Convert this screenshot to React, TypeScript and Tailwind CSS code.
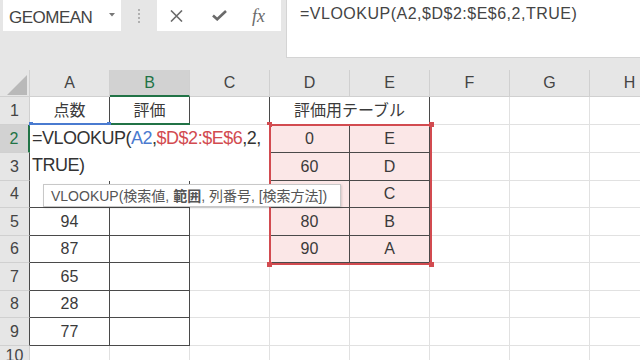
import React from 'react'

const COLS = ['A', 'B', 'C', 'D', 'E', 'F', 'G', 'H']
const HEIGHTS = [28, 28, 28, 27, 28, 27, 28, 27, 28, 20]

// D4 sits under the function tooltip, so it is left out
const values: Record<string, string> = {
    A1: '点数', B1: '評価',
    A5: '94', A6: '87', A7: '65', A8: '28', A9: '77',
    D2: '0', D3: '60', D5: '80', D6: '90',
    E2: 'E', E3: 'D', E4: 'C', E5: 'B', E6: 'A',
}

// dark right border = table edge
function darkRight(r: number, c: number) {
    if (r >= 1 && r <= 9 && c <= 1) return true
    if (r >= 1 && r <= 6 && c >= 2 && c <= 4) return true
    return false
}

function darkBottom(r: number, c: number) {
    if (r >= 1 && r <= 9 && c <= 1) return true
    if (r >= 1 && r <= 6 && (c === 3 || c === 4)) return true
    return false
}

function Cell({ r, c }: { r: number, c: number }) {
    const key = COLS[c] + r
    const pink = r >= 2 && r <= 6 && (c === 3 || c === 4)
    return (
        <div
            className={`w-[80px] shrink-0 h-full border-r border-b flex items-center justify-center text-[16px] leading-none
                ${darkRight(r, c) ? 'border-r-[#4a4a4a]' : 'border-r-[#e1e1e1]'}
                ${darkBottom(r, c) ? 'border-b-[#4a4a4a]' : 'border-b-[#e1e1e1]'}
                ${pink ? 'bg-[#fbe7e7]' : 'bg-white'}`}
        >
            {values[key] ?? ''}
        </div>
    )
}

function Row({ r, h }: { r: number, h: number }) {
    const active = r === 2
    return (
        <div className="flex" style={{ height: h }}>
            <div
                className={`w-[30px] shrink-0 h-full border-b border-b-[#d0d0d0] flex items-center justify-center text-[16px] leading-none
                    ${active ? 'bg-[#d2d2d2] text-[#217346] border-r-2 border-r-[#217346]' : 'bg-[#e6e6e6] text-[#444] border-r'}
                    ${!active && r >= 3 && r <= 9 ? 'border-r-[#4a4a4a]' : ''}
                    ${!active && (r < 3 || r > 9) ? 'border-r-[#d0d0d0]' : ''}`}
            >
                {r}
            </div>
            {r === 1 ? (
                <>
                    <Cell r={1} c={0} />
                    <Cell r={1} c={1} />
                    <Cell r={1} c={2} />
                    <div className="w-[160px] shrink-0 h-full border-r border-r-[#4a4a4a] border-b border-b-[#4a4a4a] flex items-center justify-center text-[16px] leading-none bg-white">
                        評価用テーブル
                    </div>
                    <Cell r={1} c={5} />
                    <Cell r={1} c={6} />
                    <Cell r={1} c={7} />
                </>
            ) : (
                COLS.map((_, c) => <Cell key={c} r={r} c={c} />)
            )}
        </div>
    )
}

function TopBar() {
    return (
        <div className="h-[70px] bg-[#e6e6e6] flex items-start shrink-0">
            <div className="ml-[3px] w-[118px] h-[31px] bg-white relative pl-[6px] pt-[8px]">
                <span className="block text-[17px] leading-[20px] tracking-[-0.5px] text-[#444]">GEOMEAN</span>
                <svg className="absolute left-[106px] top-[13px]" width="6" height="4" viewBox="0 0 6 4">
                    <polygon points="0,0 6,0 3,3.5" fill="#777" />
                </svg>
            </div>
            <div className="w-[36px] h-[31px] flex flex-col items-center justify-center gap-[2px]">
                <span className="w-[2px] h-[2px] bg-[#b0b0b0]" />
                <span className="w-[2px] h-[2px] bg-[#b0b0b0]" />
                <span className="w-[2px] h-[2px] bg-[#b0b0b0]" />
                <span className="w-[2px] h-[2px] bg-[#b0b0b0]" />
            </div>
            <div className="w-[124px] h-[31px] bg-white flex items-center">
                <svg className="ml-[13px]" width="13" height="12" viewBox="0 0 13 12">
                    <path d="M1 0.5 L12 11.5 M12 0.5 L1 11.5" stroke="#6a6a6a" strokeWidth="1.6" fill="none" />
                </svg>
                <svg className="ml-[29px]" width="15" height="11" viewBox="0 0 15 11">
                    <path d="M1 5.5 L5.2 9.3 L14 1" stroke="#6a6a6a" strokeWidth="2.6" fill="none" />
                </svg>
                <span className="ml-[25px] font-['Liberation_Serif',serif] italic text-[18px] leading-none text-[#6a6a6a]">fx</span>
            </div>
            <div className="ml-[5px] flex-1 h-[58px] bg-white border-l border-b border-[#d4d4d4] pl-[13px] pt-[4px]">
                <span className="block text-[16px] leading-[20px] tracking-[0.5px] text-[#444]">=VLOOKUP(A2,$D$2:$E$6,2,TRUE)</span>
            </div>
        </div>
    )
}

function HeaderRow() {
    return (
        <div className="flex h-[27px]">
            <div className="w-[30px] shrink-0 h-full bg-[#e6e6e6] border-r border-b border-[#d0d0d0] relative">
                <svg className="absolute left-[7px] top-[5px]" width="20" height="20" viewBox="0 0 20 20">
                    <polygon points="20,0 20,20 0,20" fill="#b9b9b9" />
                </svg>
            </div>
            {COLS.map(col => (
                <div
                    key={col}
                    className={`w-[80px] shrink-0 h-full border-r border-r-[#d0d0d0] flex items-center justify-center text-[16px] leading-none
                        ${col === 'B' ? 'bg-[#d2d2d2] text-[#217346] border-b-2 border-b-[#217346]' : 'bg-[#e6e6e6] text-[#444] border-b border-b-[#d0d0d0]'}`}
                >
                    {col}
                </div>
            ))}
        </div>
    )
}

export default function App() {
    return (
        <div className="w-[640px] h-[360px] overflow-hidden bg-white flex flex-col font-['Liberation_Sans','Noto_Sans_CJK_JP',sans-serif] text-[#3a3a3a]">
            <TopBar />
            <div className="relative">
                <HeaderRow />
                {HEIGHTS.map((h, i) => <Row key={i} r={i + 1} h={h} />)}

                {/* A2 reference */}
                <div className="absolute left-[30px] top-[53px] w-[80px] h-[2px] bg-[#4a7bd0]" />
                <div className="absolute left-[29px] top-[52px] w-[4px] h-[4px] bg-[#4a7bd0]" />
                <div className="absolute left-[107px] top-[52px] w-[4px] h-[4px] bg-[#4a7bd0]" />
                {/* active cell top edge */}
                <div className="absolute left-[111px] top-[53px] w-[79px] h-[2px] bg-[#217346]" />

                {/* D2:E6 range */}
                <div className="absolute left-[269px] top-[54px] w-[163px] h-[141px] border-2 border-[#d24b50]" />
                <div className="absolute left-[267px] top-[52px] w-[5px] h-[5px] bg-[#d24b50]" />
                <div className="absolute left-[429px] top-[52px] w-[5px] h-[5px] bg-[#d24b50]" />
                <div className="absolute left-[267px] top-[192px] w-[5px] h-[5px] bg-[#d24b50]" />
                <div className="absolute left-[429px] top-[192px] w-[5px] h-[5px] bg-[#d24b50]" />

                {/* in-cell editor */}
                <div className="absolute left-[30px] top-[55px] w-[239px] h-[56px] bg-white pl-[2px] text-[18px] leading-[27px] tracking-[-0.5px] text-[#333]">
                    <div>=VLOOKUP(<span className="text-[#4a7bd0]">A2</span>,<span className="text-[#d24b50]">$D$2:$E$6</span>,2,</div>
                    <div>TRUE)</div>
                </div>

                {/* function tooltip */}
                <div className="absolute left-[43px] top-[114px] w-[298px] h-[23px] bg-white border border-[#c8c8c8] shadow-[1px_1px_2px_rgba(0,0,0,0.15)] flex items-center pl-[7px] text-[14px] leading-none text-[#555] whitespace-nowrap">
                    <span>VLOOKUP(検索値, <span className="font-bold">範囲</span>, 列番号, [検索方法])</span>
                </div>
            </div>
        </div>
    )
}
